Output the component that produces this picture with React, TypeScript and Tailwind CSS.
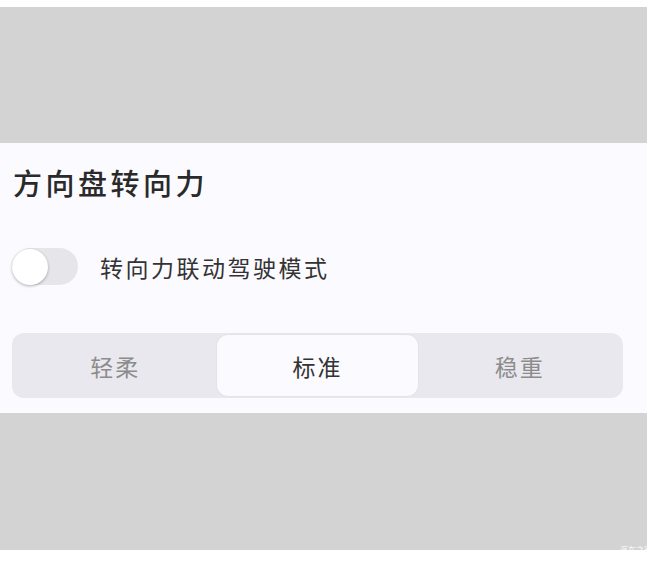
import { useState } from "react";

const options = ["轻柔", "标准", "稳重"];

export default function App() {
  const [linked, setLinked] = useState(false);
  const [mode, setMode] = useState(1);

  return (
    <div
      className="relative w-[671px] h-[563px] bg-white overflow-hidden"
      style={{ fontFamily: '"Noto Sans CJK SC", "Noto Sans", sans-serif' }}
    >
      <div className="mt-[7px] w-[647px]">
        <div className="h-[136px] bg-[#d3d3d3]" />

        {/* steering panel */}
        <section className="h-[270px] bg-[#fbfaff] px-[12px] pt-[22px]">
          <h1 className="text-[29px] leading-[34px] tracking-[3.5px] font-medium text-[#2a2a2a] pl-[1px]">
            方向盘转向力
          </h1>

          <div className="mt-[49px] flex items-center gap-[22px] h-[37px]">
            <button
              onClick={() => setLinked(!linked)}
              className={`relative w-[66px] h-[37px] rounded-full ${linked ? "bg-[#3b82f6]" : "bg-[#e6e6ea]"}`}
            >
              <span
                className={`absolute top-[0.5px] w-[36px] h-[36px] rounded-full bg-white shadow-[0_1px_3px_rgba(0,0,0,0.3)] ${linked ? "left-[30px]" : "left-0"}`}
              />
            </button>
            <span className="text-[23px] leading-[30px] tracking-[2.5px] text-[#333]">转向力联动驾驶模式</span>
          </div>

          <div className="mt-[48px] grid grid-cols-3 h-[65px] w-[611px] rounded-[12px] bg-[#e9e8ee] p-[2px]">
            {options.map((o, i) => (
              <button
                key={o}
                onClick={() => setMode(i)}
                className={`rounded-[11px] text-[23px] leading-[30px] tracking-[2px] ${
                  mode === i
                    ? "bg-[#fbfaff] text-[#333] mx-[1px] shadow-[0_0_2px_rgba(0,0,0,0.08)]"
                    : "text-[#8c8c8c]"
                }`}
              >
                {o}
              </button>
            ))}
          </div>
        </section>

        <div className="h-[137px] bg-[#d3d3d3]" />
      </div>

      <span className="absolute left-[620px] top-[545px] text-[8px] leading-[10px] text-white">汽车之家</span>
    </div>
  );
}
